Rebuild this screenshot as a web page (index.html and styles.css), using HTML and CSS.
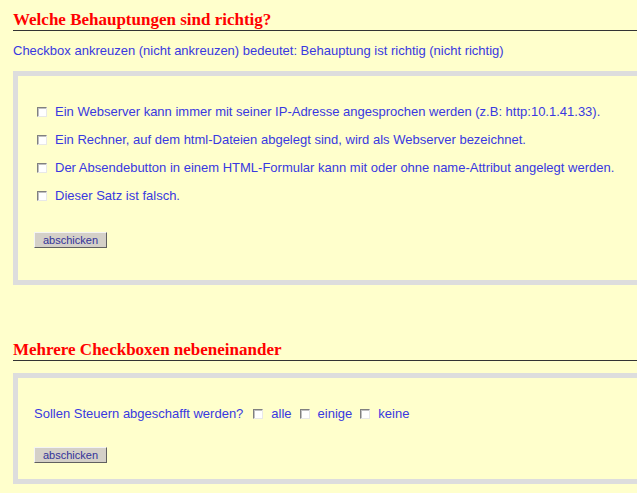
FILE: index.html
```html
<!DOCTYPE html>
<html lang="de">
<head>
  <meta charset="UTF-8" />
  <title>Checkboxen</title>
  <link rel="stylesheet" href="styles.css">
</head>
<body>

  <!-- Aufgabe 1 -->
  <h2 class="titel">Welche Behauptungen sind richtig?</h2>
  <p class="hinweis">Checkbox ankreuzen (nicht ankreuzen) bedeutet: Behauptung ist richtig (nicht richtig)</p>

  <form class="kasten">
    <div class="zeile"><input type="checkbox" /><span>Ein Webserver kann immer mit seiner IP-Adresse angesprochen werden (z.B: http:10.1.41.33).</span></div>
    <div class="zeile"><input type="checkbox" /><span>Ein Rechner, auf dem html-Dateien abgelegt sind, wird als Webserver bezeichnet.</span></div>
    <div class="zeile"><input type="checkbox" /><span>Der Absendebutton in einem HTML-Formular kann mit oder ohne name-Attribut angelegt werden.</span></div>
    <div class="zeile"><input type="checkbox" /><span>Dieser Satz ist falsch.</span></div>
    <button type="button" class="knopf">abschicken</button>
  </form>

  <!-- Aufgabe 2 -->
  <h2 class="titel zwei">Mehrere Checkboxen nebeneinander</h2>

  <form class="kasten kasten2">
    <div class="zeile">
      <span>Sollen Steuern abgeschafft werden?</span>
      <input type="checkbox" /><span>alle</span>
      <input type="checkbox" /><span>einige</span>
      <input type="checkbox" /><span>keine</span>
    </div>
    <button type="button" class="knopf">abschicken</button>
  </form>

</body>
</html>
```

FILE: styles.css
```css
html, body {
  background: #ffffcc;
  margin: 0;
  padding: 0;
  overflow: hidden;
}

body {
  padding-left: 13px;
  font-family: 'Liberation Sans', Arial, sans-serif;
  font-size: 13px;
  color: #3939e0;
}

.titel {
  font-family: 'Liberation Serif', 'Times New Roman', serif;
  font-size: 17px;
  font-weight: bold;
  color: #ff0000;
  line-height: 20px;
  margin: 10px 0 0 0;
  padding: 0;
  border-bottom: 1px solid #333333;
}

.zwei {
  margin-top: 55px;
}

.hinweis {
  margin: 12px 0 0 0;
  line-height: 15px;
}

.kasten {
  margin-top: 13px;
  border: 5px solid #dddddd;
  border-right: none;
  padding: 22px 0 32px 16px;
}

.kasten2 {
  margin-top: 12px;
  padding-top: 22px;
  padding-bottom: 16px;
}

.zeile {
  height: 28px;
  line-height: 28px;
  display: flex;
  align-items: center;
}

.zeile input {
  appearance: none;
  -webkit-appearance: none;
  width: 10px;
  height: 10px;
  margin: 0 8px 0 3px;
  background: #ffffff;
  border: 1px solid;
  border-color: #808080 #e8e8e8 #e8e8e8 #808080;
  box-shadow: inset 1px 1px 0 #c0c0c0;
}

.kasten2 .zeile span {
  margin-right: 5px;
}

.kasten2 .zeile span:first-child {
  margin-right: 7px;
}

.kasten2 .knopf {
  margin-top: 19px;
}

.knopf {
  display: block;
  margin-top: 22px;
  height: 16px;
  width: 73px;
  padding: 0;
  background: #d4d0c8;
  border: 1px solid;
  border-color: #f4f4f4 #606060 #606060 #f4f4f4;
  font-family: 'Liberation Sans', Arial, sans-serif;
  font-size: 11px;
  color: #333399;
  line-height: 13px;
}
```
